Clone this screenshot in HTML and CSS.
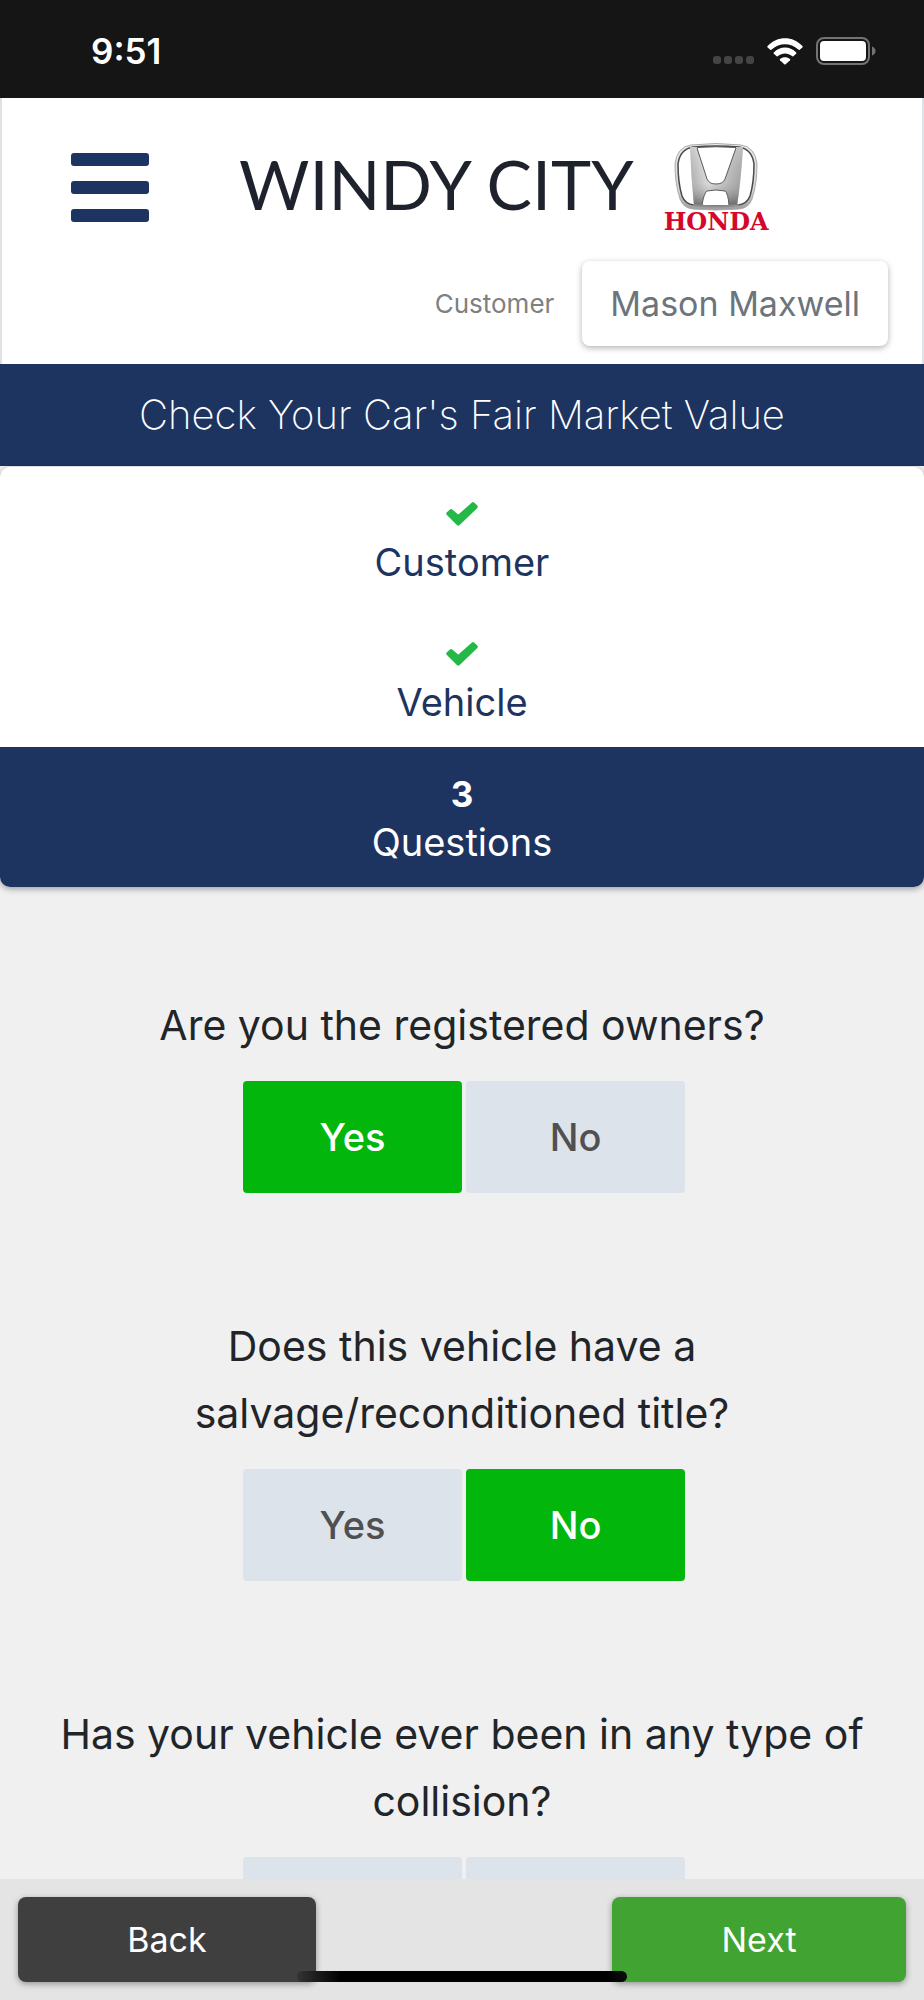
FILE: index.html
```html
<!DOCTYPE html>
<html lang="en">
<head>
<meta charset="utf-8">
<meta name="viewport" content="width=device-width, initial-scale=1">
<title>Windy City Honda</title>
<link rel="stylesheet" href="styles.css">
</head>
<body>
<div class="status">
  <time class="status-time">9:51</time>
  <div class="status-icons">
    <span class="signal"><i></i><i></i><i></i><i></i></span>
    <svg class="wifi" width="36" height="27" viewBox="0 0 36 27" aria-hidden="true">
      <path fill="#fff" d="M0.6 8C10 -2.400 26 -2.400 35.400 8Q36 8.700 35.400 9.400L32.700 11.700Q32 12.200 31.300 11.600C23.500 4.400 12.500 4.400 4.700 11.600Q4 12.200 3.300 11.700L0.600 9.400Q0 8.700 0.600 8Z"/>
      <path fill="#fff" d="M6.800 14.400C13 7.900 23 7.900 29.200 14.400Q29.800 15.100 29.200 15.700L26.300 18.200Q25.700 18.700 25 18.100C21 14.600 15 14.600 11 18.100Q10.300 18.700 9.700 18.200L6.800 15.700Q6.200 15.100 6.800 14.400Z"/>
      <path fill="#fff" d="M13 21C16 18.500 20 18.500 23 21Q23.600 21.600 23 22.200L18.700 26.300Q18 26.900 17.300 26.300L13 22.200Q12.400 21.600 13 21Z"/>
    </svg>
    <svg class="battery" width="60" height="28" viewBox="0 0 60 28" aria-hidden="true">
      <rect x="1" y="1" width="52" height="26" rx="7" fill="none" stroke="#737373" stroke-width="2"/>
      <rect x="4" y="4" width="46" height="20" rx="4" fill="#fff"/>
      <path d="M56 9.500Q59.500 11 59.500 14T56 18.500Z" fill="#737373"/>
    </svg>
  </div>
</div>

<header class="header">
  <div class="brand-row">
    <button class="menu" type="button" aria-label="Menu"><span></span><span></span><span></span></button>
    <div class="brand">
      <span class="brand-name">WINDY CITY</span>
      <div class="honda">
        <svg width="86" height="70" viewBox="0 0 86 70" aria-hidden="true">
          <defs>
            <linearGradient id="ring" x1="0" y1="0" x2="0" y2="1">
              <stop offset="0" stop-color="#ededed"/><stop offset=".7" stop-color="#d5d5d5"/><stop offset="1" stop-color="#9b9b9b"/>
            </linearGradient>
            <linearGradient id="left" x1="0" y1="0" x2="1" y2="0">
              <stop offset="0" stop-color="#a9a9a9"/><stop offset=".35" stop-color="#e3e3e3"/><stop offset="1" stop-color="#999"/>
            </linearGradient>
            <linearGradient id="shade" x1="0" y1="0" x2="0" y2="1">
              <stop offset="0" stop-color="#fff" stop-opacity=".35"/><stop offset=".6" stop-color="#bbb" stop-opacity=".2"/><stop offset="1" stop-color="#444" stop-opacity=".7"/>
            </linearGradient>
          </defs>
          <path d="M18 3Q43 0 68 3Q82 5 84 22Q84 42 79 57Q76 66 66 67Q43 69 20 67Q10 66 7 57Q2 42 2 22Q4 5 18 3Z" fill="url(#ring)" stroke="#aaa"/>
          <path d="M20 5Q43 3 66 5Q79 7 81 22Q81 41 77 54Q74 62 65 63Q43 65 21 63Q12 62 9 54Q5 41 5 22Q7 7 20 5Z" fill="#fff" stroke="#4a4a4a" stroke-width="1.500"/>
          <path d="M17 5H24L34 37Q36 42 43 42T52 37L63 5H70Q68 39 64 64H56Q55 51 52 49Q43 47 34 49Q31 51 29 64H21Q18 35 17 5Z" fill="url(#left)"/>
          <path d="M17 5H24L34 37Q36 42 43 42T52 37L63 5H70Q68 39 64 64H56Q55 51 52 49Q43 47 34 49Q31 51 29 64H21Q18 35 17 5Z" fill="url(#shade)"/>
          <path d="M24 6L34 37Q36 42 43 42T52 37L63 6M29 63Q31 51 34 49Q43 47 52 49Q55 51 56 63M24 5.500Q43 4 63 5.500" fill="none" stroke="#5c5c5c"/>
          <path d="M20 63Q43 66 66 63" fill="none" stroke="#8c8c8c" stroke-width="2"/>
        </svg>
        <span class="honda-name">HONDA</span>
      </div>
    </div>
  </div>
  <div class="customer-row">
    <span class="customer-label" id="customer-label">Customer</span>
    <button class="customer" type="button" aria-describedby="customer-label">Mason Maxwell</button>
  </div>
</header>

<h1 class="title">Check Your Car's Fair Market Value</h1>

<ol class="steps">
  <li class="step">
    <span class="step-mark"><svg width="32" height="24" viewBox="0 0 32 24" aria-hidden="true"><path class="check" d="M12.300 21.500L2.300 11.600L5 9.100L12.300 15.200L27 2.200L29.700 4.800Z"/></svg></span>
    <span>Customer</span>
  </li>
  <li class="step">
    <span class="step-mark"><svg width="32" height="24" viewBox="0 0 32 24" aria-hidden="true"><path class="check" d="M12.300 21.500L2.300 11.600L5 9.100L12.300 15.200L27 2.200L29.700 4.800Z"/></svg></span>
    <span>Vehicle</span>
  </li>
  <li class="step step-active" aria-current="step">
    <span class="step-mark">3</span>
    <span>Questions</span>
  </li>
</ol>

<main class="questions">
  <section class="question">
    <h2 class="question-text" id="q1">Are you the registered owners?</h2>
    <div class="answers" role="group" aria-labelledby="q1">
      <button class="answer answer-on" type="button" aria-pressed="true">Yes</button>
      <button class="answer" type="button" aria-pressed="false">No</button>
    </div>
  </section>
  <section class="question">
    <h2 class="question-text" id="q2">Does this vehicle have a <span class="keep">salvage/reconditioned</span> title?</h2>
    <div class="answers" role="group" aria-labelledby="q2">
      <button class="answer" type="button" aria-pressed="false">Yes</button>
      <button class="answer answer-on" type="button" aria-pressed="true">No</button>
    </div>
  </section>
  <section class="question">
    <h2 class="question-text" id="q3">Has your vehicle ever been in any type of collision?</h2>
    <div class="answers" role="group" aria-labelledby="q3">
      <button class="answer" type="button" aria-pressed="false" aria-label="Yes"></button>
      <button class="answer" type="button" aria-pressed="false" aria-label="No"></button>
    </div>
  </section>
</main>

<nav class="footer">
  <button class="nav-button back" type="button">Back</button>
  <button class="nav-button next" type="button">Next</button>
  <span class="home"></span>
</nav>
</body>
</html>
```

FILE: styles.css
```css
* {
  box-sizing: border-box;
}

body {
  margin: 0;
  background: #f0f0f0;
  color: #212529;
  font-family: Inter, "Liberation Sans", sans-serif;
}

button {
  margin: 0;
  padding: 0;
  border: 0;
  font-family: inherit;
}

.status {
  display: flex;
  align-items: center;
  justify-content: space-between;
  height: 98px;
  padding: 4px 48px 0 91px;
  background: #151515;
  color: #fff;
}

.status-time {
  font-size: 35px;
  font-weight: 600;
}

.status-icons {
  display: flex;
  align-items: center;
  gap: 13px;
}

.signal {
  display: flex;
  gap: 3px;
  padding-top: 18px;
}

.signal i {
  width: 8px;
  height: 8px;
  border-radius: 3px;
  background: #444;
}

.header {
  padding: 43px 34px 18px;
  border: solid #dee2e6;
  border-width: 0 2px;
  background: #fff;
}

.brand-row {
  display: flex;
  align-items: center;
  gap: 90px;
  height: 92px;
  padding-left: 35px;
}

.menu {
  display: flex;
  flex-direction: column;
  gap: 15px;
  width: 78px;
  background: none;
}

.menu span {
  height: 13px;
  border-radius: 3px;
  background: #1d3461;
}

.brand {
  display: flex;
  align-items: center;
  gap: 30px;
}

.brand-name {
  padding-bottom: 6px;
  color: #1e222c;
  font-family: Lato, sans-serif;
  font-size: 68px;
  line-height: 86px;
  white-space: nowrap;
}

.honda {
  display: flex;
  flex-direction: column;
  align-items: center;
}

.honda-name {
  color: #d5072b;
  font-family: "DejaVu Serif", serif;
  font-size: 24px;
  font-weight: 700;
  line-height: 20px;
}

.customer-row {
  display: flex;
  align-items: center;
  justify-content: flex-end;
  gap: 28px;
  margin-top: 28px;
}

.customer-label {
  color: #808080;
  font-size: 26px;
}

.customer {
  height: 85px;
  padding: 0 28px;
  border-radius: 8px;
  background: #fff;
  box-shadow: 0 2px 6px rgba(0, 0, 0, .3);
  color: #6c757d;
  font-size: 34px;
}

.title {
  margin: 0;
  padding: 0 16px;
  background: #1d3461;
  color: #fff;
  font-size: 40px;
  font-weight: 200;
  line-height: 102px;
  text-align: center;
}

.steps {
  margin: 1px 0 0;
  padding: 0;
  overflow: hidden;
  border-radius: 10px;
  background: #fff;
  box-shadow: 0 2px 6px rgba(0, 0, 0, .35);
  list-style: none;
}

.step {
  display: flex;
  flex-direction: column;
  align-items: center;
  height: 140px;
  padding-top: 23px;
  color: #1d3461;
  font-size: 38px;
  line-height: 48px;
}

.step-mark {
  display: flex;
  align-items: center;
  height: 48px;
  font-size: 35px;
  font-weight: 700;
}

.step-active {
  background: #1d3461;
  color: #fff;
}

.check {
  fill: #24b947;
  stroke: #24b947;
  stroke-width: 4px;
  stroke-linejoin: round;
}

.questions {
  display: flex;
  flex-direction: column;
  gap: 120px;
  padding: 105px 48px 28px;
}

.question {
  display: flex;
  flex-direction: column;
  gap: 22px;
}

.question-text {
  margin: 0;
  font-size: 41px;
  font-weight: 400;
  line-height: 67px;
  text-align: center;
}

.keep {
  white-space: nowrap;
}

.answers {
  display: flex;
  justify-content: center;
  gap: 4px;
  padding-left: 4px;
}

.answer {
  width: 219px;
  height: 112px;
  border-radius: 4px;
  background: #dde3eb;
  color: #505050;
  font-size: 38px;
  font-weight: 500;
}

.answer-on {
  background: #03b60c;
  color: #fff;
}

.footer {
  position: fixed;
  right: 0;
  bottom: 0;
  left: 0;
  display: flex;
  justify-content: space-between;
  padding: 18px;
  background: #e4e4e4;
}

.nav-button {
  height: 85px;
  border-radius: 8px;
  box-shadow: 0 2px 6px rgba(0, 0, 0, .35);
  color: #fff;
  font-size: 34px;
}

.back {
  width: 298px;
  background: #3f3f3f;
}

.next {
  width: 294px;
  background: #41a331;
}

.home {
  position: absolute;
  bottom: 18px;
  left: calc(50% - 165px);
  width: 330px;
  height: 11px;
  border-radius: 6px;
  background: linear-gradient(90deg, #333, #000 44px, #000 308px, #0c0c0c);
}
```
